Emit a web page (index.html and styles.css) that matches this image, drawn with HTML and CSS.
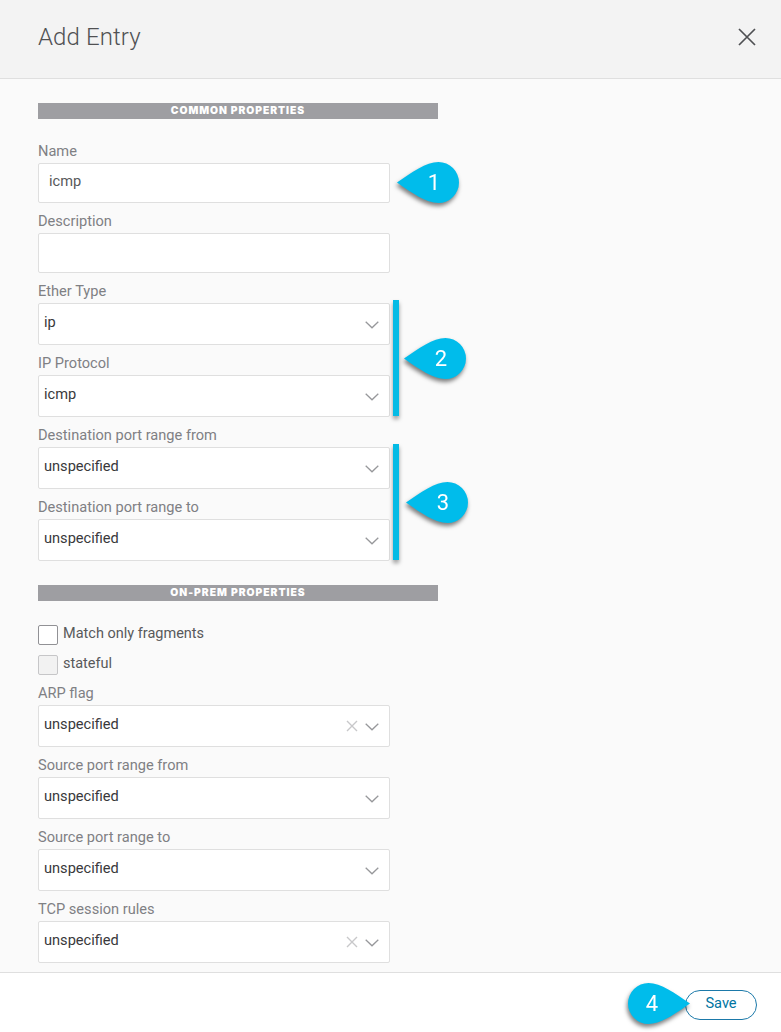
FILE: index.html
```html
<!DOCTYPE html>
<html lang="en">
<head>
<meta charset="utf-8">
<title>Add Entry</title>
<link rel="stylesheet" href="styles.css">
</head>
<body>
<svg class="defs" width="0" height="0" aria-hidden="true">
  <symbol id="chevron" viewBox="0 0 14 8"><path d="M.7.7 7 6.8 13.3.7" fill="none" stroke="currentColor" stroke-width="1.3"/></symbol>
  <symbol id="clear" viewBox="0 0 12 12"><path d="M1 1 11 11M11 1 1 11" fill="none" stroke="currentColor" stroke-width="1.4"/></symbol>
  <symbol id="drop" viewBox="0 0 62 41"><path d="M0 20.5C15 10.500 29 0 41.500 0A20.500 20.500 0 0 1 41.500 41C29 41 15 31 0 20.500Z" fill="#00bceb"/></symbol>
</svg>
<div class="dialog">
  <header class="header">
    <h1 class="title">Add Entry</h1>
    <svg class="close" viewBox="0 0 18 18"><path d="M1 1 17 17M17 1 1 17" fill="none" stroke="#4f5053" stroke-width="1.700"/></svg>
  </header>
  <main class="content">
    <h2 class="section">COMMON PROPERTIES</h2>
    <div class="fields">
      <div class="field"><label class="label">Name</label><div class="input">icmp</div></div>
      <div class="field"><label class="label">Description</label><div class="input"></div></div>
      <div class="field"><label class="label">Ether Type</label><div class="select"><span class="value">ip</span><svg class="chevron"><use href="#chevron"/></svg></div></div>
      <div class="field"><label class="label">IP Protocol</label><div class="select"><span class="value">icmp</span><svg class="chevron"><use href="#chevron"/></svg></div></div>
      <div class="field"><label class="label">Destination port range from</label><div class="select"><span class="value">unspecified</span><svg class="chevron"><use href="#chevron"/></svg></div></div>
      <div class="field"><label class="label">Destination port range to</label><div class="select"><span class="value">unspecified</span><svg class="chevron"><use href="#chevron"/></svg></div></div>
    </div>
    <h2 class="section second">ON-PREM PROPERTIES</h2>
    <div class="checks">
      <div class="check"><span class="box"></span><span class="check-text">Match only fragments</span></div>
      <div class="check"><span class="box disabled"></span><span class="check-text">stateful</span></div>
    </div>
    <div class="field"><label class="label">ARP flag</label><div class="select"><span class="value">unspecified</span><svg class="clear"><use href="#clear"/></svg><svg class="chevron"><use href="#chevron"/></svg></div></div>
    <div class="field"><label class="label">Source port range from</label><div class="select"><span class="value">unspecified</span><svg class="chevron"><use href="#chevron"/></svg></div></div>
    <div class="field"><label class="label">Source port range to</label><div class="select"><span class="value">unspecified</span><svg class="chevron"><use href="#chevron"/></svg></div></div>
    <div class="field"><label class="label">TCP session rules</label><div class="select"><span class="value">unspecified</span><svg class="clear"><use href="#clear"/></svg><svg class="chevron"><use href="#chevron"/></svg></div></div>
  </main>
  <footer class="footer"><button class="save">Save</button></footer>

  <span class="bracket bracket-a"></span>
  <span class="bracket bracket-b"></span>
  <div class="callout callout-1"><svg class="drop"><use href="#drop"/></svg><span class="number">1</span></div>
  <div class="callout callout-2"><svg class="drop"><use href="#drop"/></svg><span class="number">2</span></div>
  <div class="callout callout-3"><svg class="drop"><use href="#drop"/></svg><span class="number">3</span></div>
  <div class="callout callout-4"><svg class="drop flipped" viewBox="0 0 62 41"><g transform="matrix(-1 0 0 1 62 0)"><use href="#drop" width="62" height="41"/></g></svg><span class="number">4</span></div>
</div>
</body>
</html>
```
FILE: styles.css
```css
* { box-sizing: border-box; }
body { margin: 0; font-family: Roboto, "Liberation Sans", sans-serif; }
.defs { position: absolute; }
.dialog { position: relative; display: flex; flex-direction: column; width: 781px; height: 1032px; background: #fafafa; overflow: hidden; }
.header { display: flex; justify-content: space-between; align-items: flex-start; height: 79px; padding: 22px 25px 0 38px; background: #f3f3f3; border-bottom: 1px solid #dfdfdf; }
.title { margin: 0; font: 300 24px/30px Roboto, sans-serif; letter-spacing: .1px; color: #505153; }
.close { width: 18px; height: 18px; margin-top: 6px; }
.content { flex: 1; padding: 24px 38px 0; }
.section { width: 400px; height: 16px; margin: 0 0 14px; background: #9e9ea2; color: #fff; font: 900 10.3px/15px Inter, sans-serif; letter-spacing: .95px; text-align: center; }
.second { margin: 24px 0; letter-spacing: 1px; }
.field { width: 352px; }
.label { display: block; height: 30px; padding-top: 7px; font-size: 14.6px; line-height: 23px; color: #7f8084; }
.input, .select { background: #fff; border: 1px solid #dfdfdf; border-radius: 2px; font-size: 14.6px; }
.input { height: 40px; padding-left: 10px; line-height: 35px; color: #58595b; }
.select { display: flex; align-items: center; height: 42px; padding: 0 10px 0 5px; color: #39393b; }
.value { flex: 1; line-height: 20px; margin-top: -5px; }
.chevron { width: 14px; height: 8px; margin-top: 2px; color: #97989b; }
.clear { width: 12px; height: 12px; margin: 0 7px 0 0; color: #c8c8ca; }
.checks { display: grid; gap: 10px; }
.check { display: flex; gap: 5px; height: 20px; }
.box { width: 20px; height: 20px; border: 1px solid #919195; border-radius: 2px; background: #fff; }
.disabled { background: #f2f2f2; border-color: #c6c6c8; }
.check-text { font-size: 14.5px; line-height: 17px; color: #58595b; }
.footer { display: flex; justify-content: flex-end; height: 60px; padding: 17px 24px 0; background: #fff; border-top: 1px solid #dfdfdf; }
.save { width: 72px; height: 30px; padding: 0 0 5px; border: 1px solid #1b79a9; border-radius: 15px; background: #fff; color: #0175a2; font: 14.6px/22px Roboto, sans-serif; }
.bracket { position: absolute; left: 393px; width: 6px; height: 116px; background: #04bbe5; box-shadow: 0 3px 4px rgba(0,0,0,.4); }
.bracket-a { top: 300px; }
.bracket-b { top: 444px; }
.callout { position: absolute; width: 62px; height: 41px; filter: drop-shadow(-1px 3px 2px rgba(0,0,0,.5)); }
.callout-1 { left: 397px; top: 162px; }
.callout-2 { left: 404px; top: 338px; }
.callout-3 { left: 406px; top: 482px; }
.callout-4 { left: 628px; top: 983px; }
.drop { display: block; width: 62px; height: 41px; }
.number { position: absolute; left: 27px; top: 0; width: 20px; line-height: 41px; font-size: 22px; text-align: center; color: #fff; }
.callout-4 .number { left: 14px; }
```
